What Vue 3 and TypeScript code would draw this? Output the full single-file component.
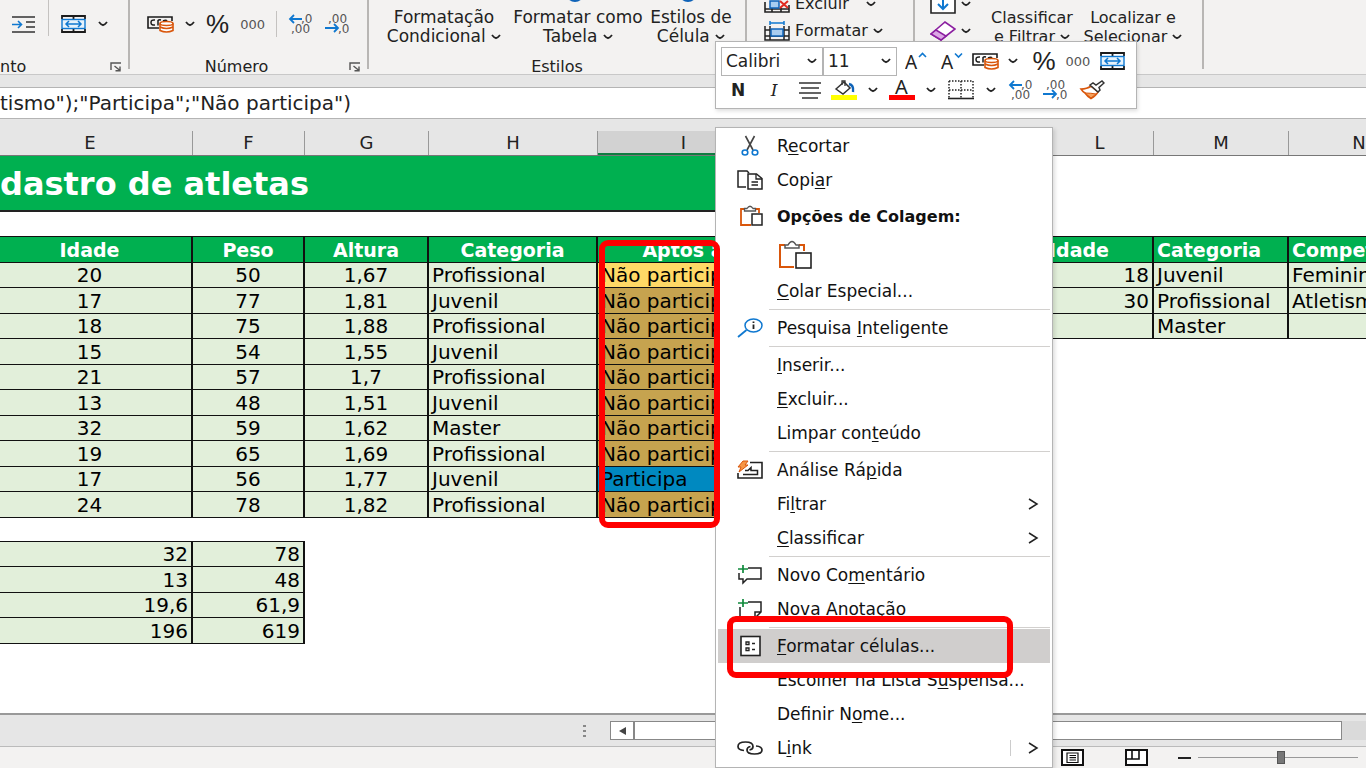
<script setup lang="ts">
import { ref } from 'vue'

interface MenuEntry {
  pre: string
  key: string
  post: string
  icon?: string
  arrow?: boolean
  split?: boolean
  active?: boolean
  separated?: boolean
}

const entries: MenuEntry[] = [
  { pre: '', key: 'C', post: 'olar Especial...' },
  { pre: 'Pesquisa ', key: 'I', post: 'nteligente', icon: 'i-search', separated: true },
  { pre: '', key: 'I', post: 'nserir...', separated: true },
  { pre: '', key: 'E', post: 'xcluir...' },
  { pre: 'Limpar con', key: 't', post: 'eúdo' },
  { pre: 'Análise Rá', key: 'p', post: 'ida', icon: 'i-quick', separated: true },
  { pre: 'Fi', key: 'l', post: 'trar', arrow: true },
  { pre: '', key: 'C', post: 'lassificar', arrow: true },
  { pre: 'Novo Co', key: 'm', post: 'entário', icon: 'i-comment', separated: true },
  { pre: '', key: 'N', post: 'ova Anotação', icon: 'i-note' },
  { pre: '', key: 'F', post: 'ormatar células...', icon: 'i-format', active: true, separated: true },
  { pre: 'Escolher na Lista S', key: 'u', post: 'spensa...' },
  { pre: 'Definir N', key: 'o', post: 'me...' },
  { pre: 'L', key: 'i', post: 'nk', icon: 'i-link', arrow: true, split: true },
]

const columns = [
  { name: 'E', cls: 'c-e' },
  { name: 'F', cls: 'c-f' },
  { name: 'G', cls: 'c-g' },
  { name: 'H', cls: 'c-h' },
  { name: 'I', cls: 'c-i selected' },
  { name: '', cls: 'c-hidden' },
  { name: 'L', cls: 'c-l' },
  { name: 'M', cls: 'c-m' },
  { name: 'N', cls: 'c-n' },
]

const athletes: [string, string, string, string, string][] = [
  ['20', '50', '1,67', 'Profissional', 'Não participa'],
  ['17', '77', '1,81', 'Juvenil', 'Não participa'],
  ['18', '75', '1,88', 'Profissional', 'Não participa'],
  ['15', '54', '1,55', 'Juvenil', 'Não participa'],
  ['21', '57', '1,7', 'Profissional', 'Não participa'],
  ['13', '48', '1,51', 'Juvenil', 'Não participa'],
  ['32', '59', '1,62', 'Master', 'Não participa'],
  ['19', '65', '1,69', 'Profissional', 'Não participa'],
  ['17', '56', '1,77', 'Juvenil', 'Participa'],
  ['24', '78', '1,82', 'Profissional', 'Não participa'],
]

const summary = [['32', '78'], ['13', '48'], ['19,6', '61,9'], ['196', '619']]
const rules = [['18', 'Juvenil', 'Feminino'], ['30', 'Profissional', 'Atletismo'], ['', 'Master', '']]

const formula = ref('tismo");"Participa";"Não participa")')
const font = ref('Calibri')
const size = ref('11')
const zoom = ref(52)
</script>

<template>
  <div class="app">
    <svg class="defs" aria-hidden="true">
      <symbol id="i-chev" viewBox="0 0 10 6"><path d="M1 1Q3 3.600 5 4.200Q7 3.600 9 1" fill="none" stroke="#222" stroke-width="1.800" /></symbol>
      <symbol id="i-indent" viewBox="0 0 24 17">
        <path d="M0 1H23M14 6H23M14 11H23M0 16H23" stroke="#333" stroke-width="1.600" />
        <path d="M0 8.500H9M6 5L9.500 8.500L6 12" fill="none" stroke="#0f78d0" stroke-width="1.600" />
      </symbol>
      <symbol id="i-merge" viewBox="0 0 25 18">
        <path d="M1 4V1H24V4M1 14V17H24V14M12.500 1V4M12.500 14V17" fill="none" stroke="#1b1b1b" stroke-width="1.800" />
        <rect x="1" y="4.500" width="23" height="9" fill="#e6f2fb" stroke="#0f78d0" stroke-width="1.400" />
        <path d="M5 9H20M8 6L5 9L8 12M17 6L20 9L17 12" fill="none" stroke="#0f78d0" stroke-width="1.500" />
      </symbol>
      <symbol id="i-money" viewBox="0 0 27 18">
        <path d="M12 13H1V2H25V6" fill="none" stroke="#1b1b1b" stroke-width="1.600" />
        <path d="M8 5Q4 4.500 4 7.500Q4 10.500 8 10M11 10.500V5.500Q12 4.500 14 5M16 6Q19 4.500 20 6" fill="none" stroke="#1b1b1b" stroke-width="1.500" />
        <path d="M13 8.500V15.500Q19.500 18.500 26 15.500V8.500" fill="#fff" stroke="#d9560b" stroke-width="1.600" />
        <ellipse cx="19.500" cy="8.500" rx="6.500" ry="2" fill="#fff" stroke="#d9560b" stroke-width="1.600" />
        <path d="M13 12Q19.500 15 26 12" fill="none" stroke="#d9560b" stroke-width="1.600" />
      </symbol>
      <symbol id="i-dec" viewBox="0 0 26 20">
        <g fill="#555" font-family="DejaVu Sans, sans-serif" font-size="12"><text x="13" y="9">,0</text><text x="3" y="19">,00</text></g>
        <path d="M14 5H2M6 1L2 5L6 9" fill="none" stroke="#0f78d0" stroke-width="1.800" />
      </symbol>
      <symbol id="i-inc" viewBox="0 0 26 20">
        <g fill="#555" font-family="DejaVu Sans, sans-serif" font-size="12"><text x="3" y="9">,00</text><text x="13" y="19">,0</text></g>
        <path d="M0 14H13M9 10L13 14L9 18" fill="none" stroke="#0f78d0" stroke-width="1.800" />
      </symbol>
      <symbol id="i-launch" viewBox="0 0 12 10">
        <path d="M1 8V1H11M4.500 4L10 8.500M10 4.500V8.800H5.500" fill="none" stroke="#555" stroke-width="1.400" />
      </symbol>
      <symbol id="i-delete" viewBox="0 0 26 18">
        <path d="M1 7V17H25V10M1 14H25M8 13V17M17 13V17" fill="none" stroke="#222" stroke-width="1.600" />
        <rect x="6" y="6" width="9" height="7" fill="#a9cdf0" stroke="#0f63b8" stroke-width="1.500" />
        <path d="M16 6L24 13M24 6L16 13" stroke="#e02b20" stroke-width="2" />
      </symbol>
      <symbol id="i-cells" viewBox="0 0 26 20">
        <path d="M1 5V19H25V5M1 9H25M1 15H25M6 5V19M20 5V19" fill="none" stroke="#222" stroke-width="1.500" />
        <rect x="7" y="8" width="12" height="7" fill="#a9cdf0" stroke="#0f63b8" stroke-width="1.500" />
        <path d="M6 2H20M6 0V4M20 0V4" stroke="#0f78d0" stroke-width="1.500" />
      </symbol>
      <symbol id="i-fill" viewBox="0 0 26 20">
        <path d="M1 1V19H25V1" fill="#fff" stroke="#222" stroke-width="1.600" />
        <path d="M13 0V15M8 10L13 15L18 10" fill="none" stroke="#0f78d0" stroke-width="2" />
      </symbol>
      <symbol id="i-eraser" viewBox="0 0 26 20">
        <path d="M1 13L15 1L25 8L11 19Z" fill="#fff" stroke="#8b1fa0" stroke-width="1.600" />
        <path d="M1 13L6 9L16 15L11 19Z" fill="#dca7e6" stroke="#8b1fa0" stroke-width="1.600" />
      </symbol>
      <symbol id="i-grow" viewBox="0 0 22 18">
        <text x="0" y="17" font-family="Noto Sans, sans-serif" font-size="19" fill="#222">A</text>
        <path d="M14 5L17.500 1.500L21 5" fill="none" stroke="#0f78d0" stroke-width="1.600" />
      </symbol>
      <symbol id="i-shrink" viewBox="0 0 22 18">
        <text x="0" y="17" font-family="Noto Sans, sans-serif" font-size="19" fill="#222">A</text>
        <path d="M14 1.500L17.500 5L21 1.500" fill="none" stroke="#0f78d0" stroke-width="1.600" />
      </symbol>
      <symbol id="i-align" viewBox="0 0 24 17"><path d="M1 1H23M3 6H21M1 11H23M4 16H20" stroke="#333" stroke-width="1.500" /></symbol>
      <symbol id="i-bucket" viewBox="0 0 26 20">
        <path d="M5 9L13 2L19 8L12 14Z" fill="#fff" stroke="#333" stroke-width="1.500" />
        <path d="M11 5V1H14V6" fill="none" stroke="#333" stroke-width="1.300" />
        <path d="M18 4Q23 5 22 12" fill="none" stroke="#0f63b8" stroke-width="2.400" />
        <rect y="15" width="26" height="5" fill="#ff0" />
      </symbol>
      <symbol id="i-color" viewBox="0 0 26 20">
        <text x="6" y="14" font-family="Noto Sans, sans-serif" font-size="20" fill="#222">A</text>
        <rect y="15" width="26" height="5" fill="#f00" />
      </symbol>
      <symbol id="i-border" viewBox="0 0 26 20">
        <path d="M1 1H25M1 10H25M1 1V18M13 1V18M25 1V18" fill="none" stroke="#222" stroke-width="1.500" stroke-dasharray="1.500 1.500" />
        <path d="M0 18.500H26" stroke="#222" stroke-width="1.600" />
      </symbol>
      <symbol id="i-brush" viewBox="0 0 26 20">
        <path d="M2 9Q8 9 12 6L19 12Q17 16 12 18.500Q8 16 6 13Q4 12 2 9Z" fill="#fff" stroke="#d9560b" stroke-width="1.600" />
        <path d="M6 13Q12 13 17 14L12 18Z" fill="#f6a15c" stroke="#d9560b" stroke-width="1" />
        <path d="M11 5L14 3L17 5L23 1L25 3L20 7.500L21 10L19 12Z" fill="#fff" stroke="#333" stroke-width="1.500" />
      </symbol>
      <symbol id="i-cut" viewBox="0 0 26 22">
        <path d="M8.500 1L16 15M17.500 1L10 15" stroke="#444" stroke-width="1.600" />
        <ellipse cx="8" cy="17.500" rx="2.800" ry="2.500" fill="none" stroke="#0f78d0" stroke-width="1.600" />
        <ellipse cx="18" cy="17.500" rx="2.800" ry="2.500" fill="none" stroke="#0f78d0" stroke-width="1.600" />
      </symbol>
      <symbol id="i-copy" viewBox="0 0 26 22">
        <path d="M9 18H1V2H10L12 4" fill="none" stroke="#222" stroke-width="1.500" />
        <path d="M11 5H19.500L25 9.500V20H11Z" fill="#fff" stroke="#222" stroke-width="1.500" />
        <path d="M19 5V10H25M14.500 13H21M14.500 16H21" fill="none" stroke="#222" stroke-width="1.300" />
      </symbol>
      <symbol id="i-paste" viewBox="0 0 26 22">
        <path d="M8 4H4V20H14M18 4H22V8" fill="none" stroke="#d9560b" stroke-width="1.800" />
        <path d="M7.500 6V3.500H10Q13 -1 16 3.500H18.500V6Z" fill="#fff" stroke="#555" stroke-width="1.300" />
        <rect x="15" y="9" width="10" height="11" fill="#fff" stroke="#222" stroke-width="1.500" />
      </symbol>
      <symbol id="i-paste-big" viewBox="0 0 34 30">
        <path d="M7 5H2V27H16M21 5H26V11" fill="none" stroke="#d9560b" stroke-width="2" />
        <path d="M7 8V5H10Q14 -2 18 5H21V8Z" fill="#fff" stroke="#555" stroke-width="1.500" />
        <rect x="18" y="13" width="15" height="15" fill="#fff" stroke="#222" stroke-width="1.600" />
      </symbol>
      <symbol id="i-search" viewBox="0 0 26 22">
        <path d="M1 20L9.500 13" stroke="#0f78d0" stroke-width="1.800" />
        <ellipse cx="16.500" cy="8.500" rx="8.500" ry="6.500" fill="#fff" stroke="#0f78d0" stroke-width="1.500" />
        <path d="M16.500 7.500V12M16.500 4.500V6" stroke="#222" stroke-width="1.800" />
      </symbol>
      <symbol id="i-quick" viewBox="0 0 26 22">
        <path d="M13 3.500H25V19H1V14" fill="none" stroke="#222" stroke-width="1.600" />
        <path d="M6 15.500H20.500V11.500H14V8.500L11 11.500H8" fill="none" stroke="#222" stroke-width="1.500" />
        <path d="M6 2H11L8 6H11L2 13L4 8H1Z" fill="#f79646" stroke="#d9560b" stroke-width="1" />
      </symbol>
      <symbol id="i-comment" viewBox="0 0 26 22">
        <path d="M11 4H24V15H10L6 19V15H2V9" fill="none" stroke="#222" stroke-width="1.500" />
        <path d="M1 5H11M6 1V9" stroke="#118a3d" stroke-width="1.700" />
      </symbol>
      <symbol id="i-note" viewBox="0 0 26 22">
        <path d="M11 4H24V14L18 20H3V9M24 14H18V20" fill="none" stroke="#222" stroke-width="1.500" />
        <path d="M1 5H11M6 1V9" stroke="#118a3d" stroke-width="1.700" />
      </symbol>
      <symbol id="i-format" viewBox="0 0 26 22">
        <rect x="4" y="1.500" width="19" height="19" fill="#fff" stroke="#222" stroke-width="1.600" />
        <path d="M9 7H12V9.500H9ZM9 13H12V15.500H9ZM15 8.500H18M15 14.500H18" fill="none" stroke="#222" stroke-width="1.300" />
      </symbol>
      <symbol id="i-link" viewBox="0 0 26 22">
        <path d="M7 13.500Q1 13 1 9.500Q1 5 8.500 5Q16 5 16 9.500Q16 12.500 12.500 13" fill="none" stroke="#222" stroke-width="1.700" />
        <path d="M19 9Q25 9.500 25 13Q25 17 17.500 17Q10 17 10 13Q10 10 13.500 9.500" fill="none" stroke="#222" stroke-width="1.700" />
      </symbol>
      <symbol id="i-right" viewBox="0 0 12 12"><path d="M2 1L10 6L2 11" fill="none" stroke="#222" stroke-width="1.500" /></symbol>
      <symbol id="i-page" viewBox="0 0 23 17">
        <path d="M1 1H22V16H1Z" fill="#fff" stroke="#111" stroke-width="2" />
        <path d="M6 4H17V13.500H6ZM8.500 6.500H15M8.500 8.700H15M8.500 11H15" fill="none" stroke="#111" stroke-width="1.200" />
      </symbol>
      <symbol id="i-break" viewBox="0 0 23 17">
        <path d="M1 1H22V16H1Z" fill="#fff" stroke="#111" stroke-width="2" />
        <path d="M1 10H14V1M7 1V10" fill="none" stroke="#111" stroke-width="1.600" />
      </symbol>
    </svg>

    <header class="ribbon">
      <section class="group g-align">
        <div class="tools">
          <button aria-label="Aumentar recuo"><svg width="24" height="17"><use href="#i-indent" /></svg></button>
          <i class="rule tall" />
          <button aria-label="Mesclar"><svg width="25" height="18"><use href="#i-merge" /></svg></button>
          <button aria-label="Opções de mesclagem"><svg width="10" height="6"><use href="#i-chev" /></svg></button>
        </div>
        <div class="caption"><span>nto</span><button aria-label="Mais alinhamento"><svg width="12" height="10"><use href="#i-launch" /></svg></button></div>
      </section>
      <section class="group g-number">
        <div class="tools">
          <button aria-label="Moeda"><svg width="27" height="18"><use href="#i-money" /></svg></button>
          <button aria-label="Opções de moeda"><svg width="10" height="6"><use href="#i-chev" /></svg></button>
          <button class="pct">%</button>
          <button class="zeros">000</button>
          <i class="rule" />
          <button aria-label="Aumentar casas decimais"><svg width="26" height="20"><use href="#i-dec" /></svg></button>
          <button aria-label="Diminuir casas decimais"><svg width="26" height="20"><use href="#i-inc" /></svg></button>
        </div>
        <div class="caption"><span>Número</span><button aria-label="Mais formatos"><svg width="12" height="10"><use href="#i-launch" /></svg></button></div>
      </section>
      <section class="group g-styles">
        <div class="big">
          <button>Formatação<br>Condicional <svg width="10" height="6"><use href="#i-chev" /></svg></button>
          <button class="dot">Formatar como<br>Tabela <svg width="10" height="6"><use href="#i-chev" /></svg></button>
          <button class="dot">Estilos de<br>Célula <svg width="10" height="6"><use href="#i-chev" /></svg></button>
        </div>
        <div class="caption"><span>Estilos</span></div>
      </section>
      <section class="group g-cells">
        <div class="stack">
          <button><svg width="26" height="18"><use href="#i-delete" /></svg><span class="wide">Excluir</span><svg width="10" height="6"><use href="#i-chev" /></svg></button>
          <button><svg width="26" height="20"><use href="#i-cells" /></svg><span>Formatar</span><svg width="10" height="6"><use href="#i-chev" /></svg></button>
        </div>
      </section>
      <section class="group g-edit">
        <div class="stack">
          <button aria-label="Preencher"><svg width="26" height="20"><use href="#i-fill" /></svg><svg width="10" height="6"><use href="#i-chev" /></svg></button>
          <button aria-label="Limpar"><svg width="26" height="20"><use href="#i-eraser" /></svg><svg width="10" height="6"><use href="#i-chev" /></svg></button>
        </div>
        <div class="big">
          <button>Classificar<br>e Filtrar <svg width="10" height="6"><use href="#i-chev" /></svg></button>
          <button>Localizar e<br>Selecionar <svg width="10" height="6"><use href="#i-chev" /></svg></button>
        </div>
      </section>
    </header>

    <input v-model="formula" class="formula" aria-label="Barra de fórmulas">

    <div class="letters">
      <div v-for="c in columns" :key="c.cls" :class="['letter', c.cls]">{{ c.name }}</div>
    </div>

    <main class="sheet">
      <h1 class="title">dastro de atletas</h1>
      <div class="tables">
        <div class="left">
          <table class="grid main">
            <colgroup><col class="c-e"><col class="c-f"><col class="c-g"><col class="c-h"><col class="c-i"></colgroup>
            <thead><tr><th>Idade</th><th>Peso</th><th>Altura</th><th>Categoria</th><th>Aptos a</th></tr></thead>
            <tbody>
              <tr v-for="(a, i) in athletes" :key="i">
                <td class="mid">{{ a[0] }}</td><td class="mid">{{ a[1] }}</td><td class="mid">{{ a[2] }}</td><td>{{ a[3] }}</td>
                <td :class="['status', { first: i === 0, yes: a[4] === 'Participa' }]">{{ a[4] }}</td>
              </tr>
            </tbody>
          </table>
          <table class="grid totals">
            <colgroup><col class="c-e"><col class="c-f"></colgroup>
            <tbody><tr v-for="r in summary" :key="r[0]"><td v-for="v in r" :key="v" class="num">{{ v }}</td></tr></tbody>
          </table>
        </div>
        <table class="grid rules">
          <colgroup><col class="c-l"><col class="c-m"><col class="c-n"></colgroup>
          <thead><tr><th>Idade</th><th>Categoria</th><th>Competição</th></tr></thead>
          <tbody><tr v-for="r in rules" :key="r[1]"><td class="num">{{ r[0] }}</td><td>{{ r[1] }}</td><td>{{ r[2] }}</td></tr></tbody>
        </table>
      </div>
    </main>

    <div class="scroll">
      <span class="grip"><i /><i /><i /></span>
      <button class="back" aria-label="Rolar para a esquerda"><i /></button>
      <div class="track" />
      <div class="rest" />
    </div>
    <footer class="status-bar">
      <button aria-label="Layout da página"><svg width="23" height="17"><use href="#i-page" /></svg></button>
      <button aria-label="Quebra de página"><svg width="23" height="17"><use href="#i-break" /></svg></button>
      <button class="minus" aria-label="Reduzir zoom"><i /></button>
      <input v-model="zoom" type="range" min="0" max="100" aria-label="Zoom">
    </footer>

    <div class="mini" role="toolbar">
      <div class="row top">
        <label class="combo"><select v-model="font" aria-label="Fonte"><option>Calibri</option><option>Arial</option></select><svg width="10" height="6"><use href="#i-chev" /></svg></label>
        <label class="combo"><select v-model="size" aria-label="Tamanho"><option>11</option><option>12</option></select><svg width="10" height="6"><use href="#i-chev" /></svg></label>
        <button aria-label="Aumentar fonte"><svg width="22" height="18"><use href="#i-grow" /></svg></button>
        <button aria-label="Diminuir fonte"><svg width="22" height="18"><use href="#i-shrink" /></svg></button>
        <button aria-label="Moeda"><svg width="27" height="18"><use href="#i-money" /></svg></button>
        <button aria-label="Opções de moeda"><svg width="10" height="6"><use href="#i-chev" /></svg></button>
        <button class="pct">%</button>
        <button class="zeros">000</button>
        <button aria-label="Mesclar"><svg width="25" height="18"><use href="#i-merge" /></svg></button>
      </div>
      <div class="row low">
        <button class="bold">N</button>
        <button class="italic">I</button>
        <button aria-label="Centralizar"><svg width="24" height="17"><use href="#i-align" /></svg></button>
        <button aria-label="Cor de preenchimento"><svg width="26" height="20"><use href="#i-bucket" /></svg></button>
        <button aria-label="Mais cores de preenchimento"><svg width="10" height="6"><use href="#i-chev" /></svg></button>
        <button aria-label="Cor da fonte"><svg width="26" height="20"><use href="#i-color" /></svg></button>
        <button aria-label="Mais cores da fonte"><svg width="10" height="6"><use href="#i-chev" /></svg></button>
        <button aria-label="Bordas"><svg width="26" height="20"><use href="#i-border" /></svg></button>
        <button aria-label="Mais bordas"><svg width="10" height="6"><use href="#i-chev" /></svg></button>
        <button aria-label="Aumentar casas decimais"><svg width="26" height="20"><use href="#i-dec" /></svg></button>
        <button aria-label="Diminuir casas decimais"><svg width="26" height="20"><use href="#i-inc" /></svg></button>
        <button aria-label="Pincel de formatação"><svg width="26" height="20"><use href="#i-brush" /></svg></button>
      </div>
    </div>

    <nav class="menu">
      <button class="item"><svg width="26" height="22"><use href="#i-cut" /></svg><span>R<u>e</u>cortar</span></button>
      <button class="item"><svg width="26" height="22"><use href="#i-copy" /></svg><span>Copi<u>a</u>r</span></button>
      <div class="item heading"><svg width="26" height="22"><use href="#i-paste" /></svg><span>Opções de Colagem:</span></div>
      <button class="item paste" aria-label="Colar"><svg width="34" height="30"><use href="#i-paste-big" /></svg></button>
      <template v-for="(e, i) in entries" :key="i">
        <hr v-if="e.separated">
        <button :class="['item', { active: e.active }]">
          <svg width="26" height="22"><use v-if="e.icon" :href="'#' + e.icon" /></svg>
          <span>{{ e.pre }}<u>{{ e.key }}</u>{{ e.post }}</span>
          <i v-if="e.split" class="split" />
          <svg v-if="e.arrow" class="arrow" width="12" height="12"><use href="#i-right" /></svg>
        </button>
      </template>
    </nav>

    <div class="mark mark-column" />
    <div class="mark mark-item" />
  </div>
</template>

<style>
body { margin: 0; overflow: hidden; }
</style>

<style scoped>
.app {
  position: relative;
  display: flex;
  flex-direction: column;
  height: 100vh;
  overflow: hidden;
  background: #e6e6e6;
  color: #222;
  font-family: "DejaVu Sans", "Noto Sans", sans-serif;
  font-size: 16px;
}
.app *, .app *::before { box-sizing: border-box; }
svg { display: block; flex: none; }
.defs { display: none; }
button {
  display: flex;
  align-items: center;
  justify-content: center;
  padding: 0;
  border: 0;
  background: none;
  color: inherit;
  font: inherit;
  white-space: nowrap;
}

.ribbon { display: flex; flex: none; height: 75px; background: #f3f2f1; border-bottom: 1px solid #c8c8c8; overflow: hidden; }
.group { display: flex; flex-direction: column; flex: none; height: 69px; border-right: 2px solid #b8b6b4; }
.g-align { width: 130px; }
.g-number { width: 239px; }
.g-styles { width: 378px; }
.g-cells { width: 168px; }
.g-edit { width: 289px; flex-direction: row; }
.tools { display: flex; align-items: center; height: 48px; }
.g-align .tools { gap: 12px; padding-left: 12px; }
.g-number .tools { gap: 11px; padding-left: 17px; }
.rule { width: 1px; height: 26px; background: #c4c2c0; }
.rule.tall { height: 36px; margin-bottom: 12px; }
.pct { font-family: "Liberation Sans", sans-serif; font-size: 26px; line-height: 24px; }
.zeros { color: #555; font-size: 13px; }
.caption { display: grid; grid-template-columns: 20px 1fr 20px; align-items: center; height: 20px; margin-top: auto; padding-top: 8px; line-height: 20px; }
.caption span { grid-column: 2; text-align: center; }
.g-align .caption { grid-template-columns: 0 1fr 24px; }
.g-align .caption span { text-align: left; }
.g-number .caption { grid-template-columns: 0 1fr 24px; }
.big { display: grid; grid-template-columns: 130px 138px 88px; padding: 7px 0 0 10px; font-size: 17px; }
.big button { position: relative; display: block; height: 40px; line-height: 19px; text-align: center; }
.big svg { display: inline-block; vertical-align: 2px; }
.dot::before { content: ""; position: absolute; top: -23px; left: 50%; width: 18px; height: 18px; margin-left: -12px; border: 2px solid #0f63b8; border-radius: 50%; background: #a9cdf0; }
.g-edit .big { grid-template-columns: 94px 108px; padding-left: 0; font-size: 16px; }
.stack { display: flex; flex-direction: column; margin-top: -10px; }
.stack button { height: 27px; justify-content: flex-start; gap: 5px; }
.g-cells .stack { padding-left: 17px; }
.g-cells .wide { width: 66px; text-align: left; }
.g-edit .stack { width: 70px; padding-left: 15px; }

.formula {
  flex: none;
  width: 100%;
  height: 32px;
  margin-top: 12px;
  padding: 0;
  border: solid #b4b4b4;
  border-width: 1px 0;
  border-radius: 0;
  outline: 0;
  background: #fff;
  color: #222;
  font: 20px "DejaVu Sans", sans-serif;
}

.letters { display: flex; flex: none; height: 37px; padding-top: 12px; overflow: hidden; border-bottom: 1px solid #777; }
.letter { flex: none; border-right: 1px solid #999; text-align: center; font-size: 18px; line-height: 24px; }
.letter.c-e { margin-left: -12px; }
.letter.selected { background: #d2d2d2; border-bottom: 2px solid #107c41; }
.c-e { width: 205px; }
.c-f { width: 112px; }
.c-g { width: 124px; }
.c-h { width: 169px; }
.c-i { width: 172px; }
.c-hidden { width: 276px; }
.c-l { width: 108px; }
.c-m { width: 135px; }
.c-n { width: 141px; }

.sheet { flex: 1; min-height: 0; overflow: hidden; background: #fff; color: #000; }
.title { width: 770px; height: 56px; margin: 0; background: #00b050; border-bottom: 2px solid #222; color: #fff; font-size: 32px; line-height: 56px; }
.tables { display: flex; gap: 274px; margin: 24px 0 0 -14px; }
.left { flex: none; }
.grid { table-layout: fixed; border-collapse: collapse; }
.main { width: 782px; }
.totals { width: 317px; margin-top: 23px; }
.rules { flex: none; width: 384px; align-self: flex-start; }
.grid tr { height: 25px; }
.grid thead tr, .grid tbody tr:nth-child(even) { height: 26px; }
.grid th, .grid td { padding: 0 3px; border: 2px solid #111; border-bottom-width: 1px; border-top-width: 1px; overflow: hidden; white-space: nowrap; line-height: 22px; }
.grid th { background: #00b050; color: #fff; font-size: 19px; }
.grid td { background: #e2efda; font-size: 20px; }
.rules th { text-align: left; }
.grid .mid { text-align: center; }
.grid .num { text-align: right; }
.grid .status { background: #c6a34f; }
.grid .first { background: #ffd966; }
.grid .yes { background: #0089c0; }

.scroll { display: flex; align-items: center; flex: none; height: 33px; border-top: 2px solid #999; }
.grip { display: flex; flex-direction: column; align-items: flex-end; gap: 3px; width: 586px; margin-right: 24px; }
.grip i { width: 3px; height: 2px; background: #888; }
.back { width: 24px; height: 19px; border: 1px solid #888; background: #fff; }
.back i { border: solid transparent; border-width: 4px 7px 4px 0; border-right-color: #444; }
.track { flex: 1; height: 19px; border: 1px solid #888; background: #fff; }
.rest { width: 24px; height: 19px; background: #dadada; }
.status-bar { display: flex; align-items: center; justify-content: flex-end; flex: none; height: 22px; padding-right: 8px; border-top: 1px solid #bbb; background: #f3f2f1; }
.status-bar button + button { margin-left: 41px; }
.status-bar button + .minus { width: 13px; height: 16px; margin: 0 7px 0 30px; }
.minus i { width: 13px; height: 2px; background: #222; }
.status-bar input { width: 160px; height: 16px; margin: 0; appearance: none; background: linear-gradient(#999, #999) center / 100% 1px no-repeat; }
.status-bar input::-webkit-slider-thumb { appearance: none; width: 8px; height: 13px; background: #777; border: 1px solid #555; }

.mini { position: absolute; top: 41px; left: 715px; z-index: 2; padding: 4px 5px; border: 1px solid #b4b4b4; background: #fff; box-shadow: 1px 2px 4px #0002; }
.row { display: grid; align-items: center; }
.row svg { overflow: visible; }
.top { grid-template-columns: 102px 74px 38px 34px 32px 24px 38px 30px 38px; height: 30px; }
.low { grid-template-columns: 34px 38px 34px 34px 24px 34px 24px 36px 24px 35px 35px 38px; height: 28px; }
.combo { display: flex; align-items: center; height: 29px; padding-right: 5px; border: 1px solid #b4b4b4; background: #fff; }
.combo select { flex: 1; min-width: 0; padding: 0 0 0 4px; border: 0; outline: 0; appearance: none; background: none; color: #222; font: 17px "DejaVu Sans", sans-serif; }
.bold { font-weight: 700; font-size: 17px; }
.italic { font-family: "DejaVu Serif", serif; font-style: italic; font-size: 17px; }

.menu { position: absolute; top: 127px; left: 715px; z-index: 2; width: 338px; padding: 1px 2px 2px; border: 1px solid #b4b4b4; background: #fff; box-shadow: 2px 2px 4px #0002; color: #111; font-size: 17px; }
.item { display: flex; align-items: center; justify-content: flex-start; gap: 14px; width: 100%; height: 34px; padding: 0 11px 0 19px; text-align: left; }
.item u { text-decoration: underline; text-decoration-thickness: 1px; text-underline-offset: 2px; }
.heading { height: 38px; font-size: 16px; font-weight: 700; }
.paste { height: 39px; padding-left: 60px; }
.active { background: #d0cecd; }
.arrow { margin-left: auto; }
.split { width: 1px; height: 16px; margin-left: auto; margin-right: 2px; background: #ccc; }
.split + .arrow { margin-left: 0; }
.menu hr { height: 1px; margin: 1px 0 1px 51px; border: 0; background: #d2d0ce; }

.mark { position: absolute; z-index: 3; border: 6px solid #f00; border-radius: 9px; pointer-events: none; }
.mark-column { top: 240px; left: 599px; width: 121px; height: 288px; }
.mark-item { top: 616px; left: 727px; width: 286px; height: 62px; }
</style>
